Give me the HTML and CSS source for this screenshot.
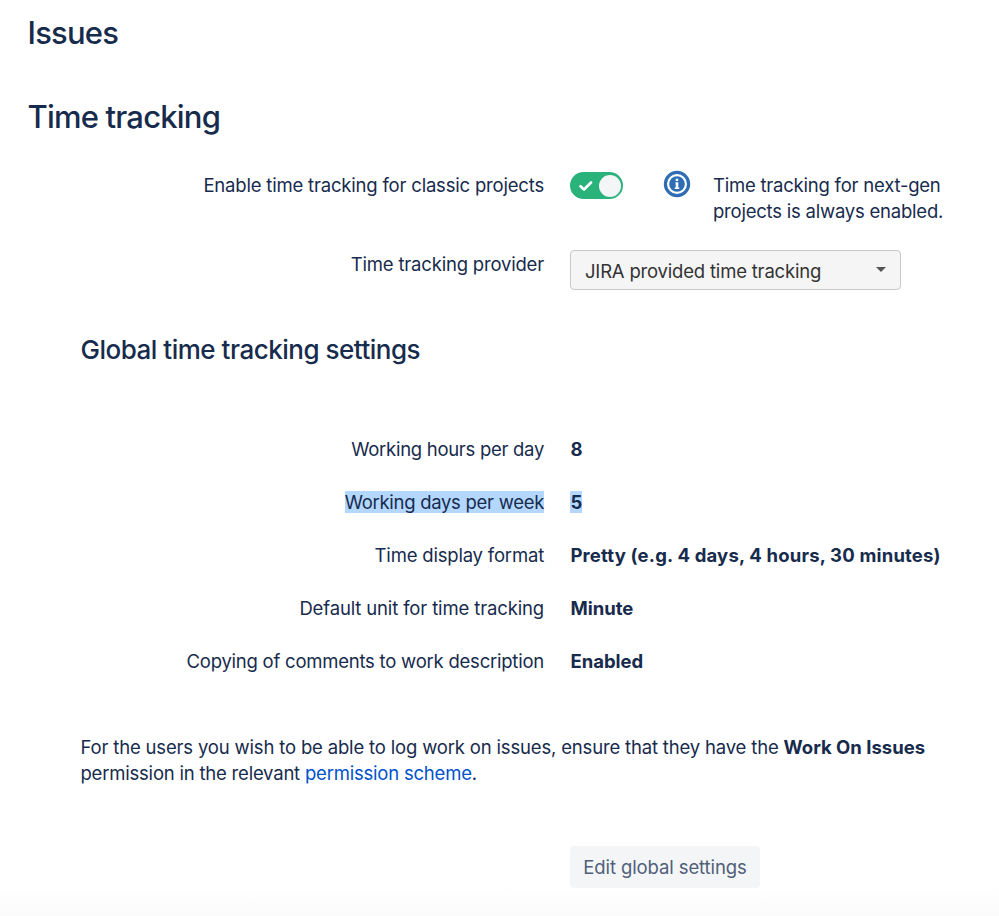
FILE: index.html
```html
<!DOCTYPE html>
<html lang="en">
<head>
<meta charset="utf-8">
<title>Time tracking</title>
<link rel="stylesheet" href="styles.css">
</head>
<body>
<main class="page">
  <h1 class="title">Issues</h1>
  <h2 class="section">Time tracking</h2>
  <div class="row row-toggle">
    <div class="label">Enable time tracking for classic projects</div>
    <div class="value toggle-value">
      <span class="toggle">
        <svg class="check" viewBox="0 0 14 12"><path d="M1.5 6.2 5 9.5 12 2.5"/></svg>
        <span class="knob"></span>
      </span>
      <svg class="info" viewBox="0 0 28 28"><circle class="ring" cx="14" cy="14" r="11.6"/><circle class="disc" cx="14" cy="14" r="7.8"/><path class="glyph" d="M12.4 12.2h2.9v5.4h1v1.4h-4.6v-1.4h1v-4h-.3zM12.7 8.8h2.5v2.1h-2.5z"/></svg>
      <p class="note">Time tracking for next-gen<br>projects is always enabled.</p>
    </div>
  </div>
  <div class="row row-provider">
    <div class="label">Time tracking provider</div>
    <div class="value"><div class="select"><span>JIRA provided time tracking</span><span class="caret"></span></div></div>
  </div>
  <h3 class="subsection">Global time tracking settings</h3>
  <div class="settings">
    <div class="row"><div class="label working">Working hours per day</div><div class="value strong">8</div></div>
    <div class="row"><div class="label working"><span class="mark">Working days per week</span></div><div class="value strong"><span class="mark">5</span></div></div>
    <div class="row"><div class="label">Time display format</div><div class="value strong format">Pretty (e.g. 4 days, 4 hours, 30 minutes)</div></div>
    <div class="row"><div class="label unit">Default unit for time tracking</div><div class="value strong">Minute</div></div>
    <div class="row"><div class="label copying">Copying of comments to work description</div><div class="value strong">Enabled</div></div>
  </div>
  <p class="help">For the users you wish to be able to log work on issues, ensure that they have the <b>Work On Issues</b><br><span class="permission">permission in the relevant <a href="#">permission scheme</a>.</span></p>
  <button class="edit" type="button">Edit global settings</button>
</main>
</body>
</html>
```

FILE: styles.css
```css
* { box-sizing: border-box; }
body {
  margin: 0;
  height: 916px;
  overflow: hidden;
  background: linear-gradient(#fff 885px, #fbfbfb 916px);
  color: #172b4d;
  font: 18.5px/26.5px Inter, "Liberation Sans", sans-serif;
  letter-spacing: -0.19px;
  white-space: nowrap;
}
h1, h2, h3, p { margin: 0; }
.page { padding: 13px 0 0 27.5px; }
.title, .section { font-size: 31px; line-height: 40px; font-weight: 500; letter-spacing: -0.8px; }
.section { margin-top: 44px; }
.row { display: grid; grid-template-columns: 516.5px 1fr; column-gap: 26.4px; }
.label { text-align: right; }
.unit { letter-spacing: -0.14px; }
.working { letter-spacing: -0.29px; }
.copying { letter-spacing: -0.23px; }
.row-toggle { margin-top: 35px; }
.toggle-value { display: flex; align-items: flex-start; }
.toggle {
  display: flex; align-items: center; justify-content: space-between;
  width: 53px; height: 27px; padding: 0 2px 0 8.5px;
  border-radius: 14px; background: #2ab27b;
}
.check { width: 14px; height: 12px; fill: none; stroke: #fff; stroke-width: 2.6; stroke-linecap: round; stroke-linejoin: round; }
.knob { width: 22px; height: 22px; border-radius: 50%; background: #f4f5f7; }
.info { width: 28px; height: 28px; margin: -2px 22px 0 40px; }
.note { margin-top: -0.4px; line-height: 26px; letter-spacing: -0.22px; }
.ring { fill: none; stroke: #2e6db4; stroke-width: 3.2; }
.disc { fill: #2e6db4; }
.glyph { fill: #fff; }
.row-provider { margin-top: 26.4px; }
.row-provider .label { padding-top: 1px; }
.select {
  display: flex; align-items: center; justify-content: space-between;
  width: 331px; height: 40px; padding: 3px 14px 0 14px;
  border: 1px solid #c8c8c8; border-radius: 4px; background: #f5f5f5; color: #333;
}
.caret { margin-top: -4px; border: 5.5px solid transparent; border-top-color: #555; border-bottom: 0; }
.row-toggle, .row-provider { column-gap: 26px; }
.subsection { margin: 44px 0 0 53px; font-size: 26px; line-height: 32px; font-weight: 500; letter-spacing: -0.49px; }
.settings { display: grid; row-gap: 26.5px; margin-top: 69.6px; }
.strong { font-weight: 700; letter-spacing: 0; }
.format { letter-spacing: 0.18px; }
.mark { background: #b3d7ff; }
.help { margin: 59.5px 0 0 53px; letter-spacing: -0.17px; }
.help b { font-weight: 700; letter-spacing: 0; }
.permission { letter-spacing: -0.21px; }
.help a { color: #0052cc; text-decoration: none; }
.edit {
  display: block; width: 190px; height: 42px; margin: 59px 0 0 542.5px; padding: 1px 0 0;
  border: 0; border-radius: 4px; background: #f4f5f7; color: #505f79; font: inherit;
  letter-spacing: -0.1px;
}
```
